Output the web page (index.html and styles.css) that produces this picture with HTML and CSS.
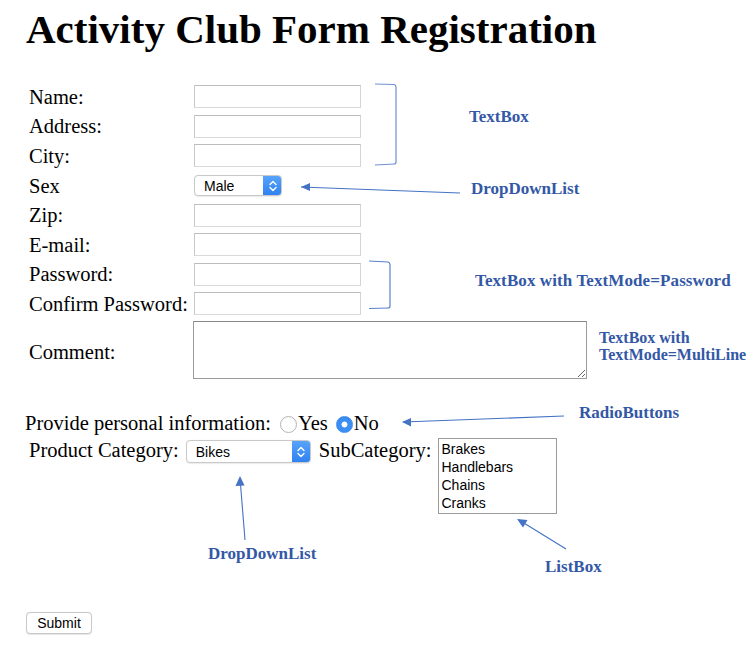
FILE: index.html
```html
<!DOCTYPE html>
<html>
<head>
<meta charset="utf-8">
<title>Activity Club Form Registration</title>
<link rel="stylesheet" href="styles.css">
</head>
<body>
<div class="page">
  <h1 class="title">Activity Club Form Registration</h1>

  <div class="form-grid">
    <label class="lbl">Name:</label><input class="tb" type="text">
    <label class="lbl">Address:</label><input class="tb" type="text">
    <label class="lbl">City:</label><input class="tb" type="text">
    <label class="lbl">Sex</label>
    <span class="select sel-sex"><select><option>Male</option><option>Female</option></select><span class="cap"><svg width="10" height="14" viewBox="0 0 10 14"><path d="M2 5.5 L5 2.5 L8 5.5 M2 8.5 L5 11.5 L8 8.5" fill="none" stroke="#fff" stroke-width="1.4" stroke-linecap="round" stroke-linejoin="round"/></svg></span></span>
    <label class="lbl">Zip:</label><input class="tb" type="text">
    <label class="lbl">E-mail:</label><input class="tb" type="text">
    <label class="lbl">Password:</label><input class="tb" type="password">
    <label class="lbl">Confirm Password:</label><input class="tb" type="password">
    <label class="lbl lbl-comment">Comment:</label><textarea class="ta"></textarea>
  </div>

  <div class="radio-row">
    <span>Provide personal information:</span>
    <input class="rb" type="radio" name="pi" id="pi-yes"><label for="pi-yes">Yes</label>
    <input class="rb" type="radio" name="pi" id="pi-no" checked><label for="pi-no">No</label>
  </div>

  <div class="product-row">
    <span class="plbl">Product Category:</span>
    <span class="select sel-cat"><select><option>Bikes</option></select><span class="cap"><svg width="10" height="14" viewBox="0 0 10 14"><path d="M2 5.5 L5 2.5 L8 5.5 M2 8.5 L5 11.5 L8 8.5" fill="none" stroke="#fff" stroke-width="1.4" stroke-linecap="round" stroke-linejoin="round"/></svg></span></span>
    <span class="plbl sub">SubCategory:</span>
    <div class="listbox">
      <div class="opt">Brakes</div>
      <div class="opt">Handlebars</div>
      <div class="opt">Chains</div>
      <div class="opt">Cranks</div>
    </div>
  </div>

  <button class="submit" type="button">Submit</button>
</div>

<div class="notes">
  <svg class="notes-svg" width="753" height="653" viewBox="0 0 753 653">
    <path d="M375 84 L394 84.5 Q396 85 396 87 L396 162 Q396 164 394 164 L375 165" fill="none" stroke="#6f8fd0" stroke-width="1.2"/>
    <path d="M369 261 L388 262 Q390 262.5 390 264.5 L390 306 Q390 308 388 308 L369 308.5" fill="none" stroke="#5b80cc" stroke-width="1.2"/>
    <line x1="460" y1="193" x2="301" y2="187" stroke="#4472c4" stroke-width="1.1"/>
    <line x1="564" y1="416" x2="403" y2="422" stroke="#4472c4" stroke-width="1.1"/>
    <line x1="245" y1="540" x2="240" y2="478" stroke="#4472c4" stroke-width="1.1"/>
    <line x1="566" y1="549" x2="519" y2="520" stroke="#4472c4" stroke-width="1.1"/>
    <path d="M301 187 L310 183 L310 191 Z" fill="#4472c4"/>
    <path d="M402 422 L411 418 L411 426.5 Z" fill="#4472c4"/>
    <path d="M240 476 L235.5 486 L244.5 485.5 Z" fill="#4472c4"/>
    <path d="M517 519 L527.5 520 L523 527.5 Z" fill="#4472c4"/>
  </svg>
  <div class="note n-textbox">TextBox</div>
  <div class="note n-ddl1">DropDownList</div>
  <div class="note n-pass">TextBox with TextMode=Password</div>
  <div class="note n-multi">TextBox with<br>TextMode=MultiLine</div>
  <div class="note n-radio">RadioButtons</div>
  <div class="note n-ddl2">DropDownList</div>
  <div class="note n-list">ListBox</div>
</div>
</body>
</html>
```

FILE: styles.css
```css
html, body {
  margin: 0;
  padding: 0;
  background: #fff;
}

body {
  font-family: "Liberation Serif", "Times New Roman", serif;
  font-size: 20.5px;
  color: #000;
  position: relative;
  width: 753px;
  height: 653px;
  overflow: hidden;
}

.page {
  padding: 6px 0 0 25px;
}

.title {
  margin: 0 0 0 1px;
  font-size: 41px;
  line-height: 46px;
  font-weight: bold;
}

/* ---- main form grid ---- */
.form-grid {
  margin: 30px 0 0 4px;
  display: grid;
  grid-template-columns: 165px auto;
  grid-template-rows: repeat(8, 29.6px) auto;
  align-items: center;
  justify-items: start;
}

.lbl {
  line-height: 22px;
}

.lbl-comment {
  padding-top: 4px;
}

.tb {
  box-sizing: border-box;
  width: 167px;
  height: 23px;
  margin: 0;
  padding: 0 4px;
  border: 1px solid;
  border-color: #bdbdbd #d4d4d4 #dadada #c8c8c8;
  background: #fff;
  font: 14px "Liberation Sans", Arial, sans-serif;
  outline: none;
}

.ta {
  box-sizing: border-box;
  width: 394px;
  height: 58px;
  margin: 2.5px 0 2px -1px;
  border: 1px solid #9a9a9a;
  border-top-color: #8a8a8a;
  padding: 2px;
  font: 14px "Liberation Sans", Arial, sans-serif;
  resize: both;
}

/* ---- Mac-style select ---- */
.select {
  position: relative;
  display: inline-block;
  box-sizing: border-box;
  border: 1px solid #c9c9c9;
  border-radius: 4px;
  background: #fff;
  box-shadow: 0 0.5px 1px rgba(0, 0, 0, 0.08);
  overflow: hidden;
}

.select select {
  -webkit-appearance: none;
  appearance: none;
  display: block;
  box-sizing: border-box;
  border: 0;
  margin: 0;
  background: transparent;
  font: 14px "Liberation Sans", Arial, sans-serif;
  color: #000;
  padding: 0 0 0 9px;
  width: 100%;
  outline: none;
}

.sel-sex select {
  height: 19px;
}

.sel-cat select {
  height: 21px;
}

.select .cap {
  position: absolute;
  top: -1px;
  right: -1px;
  bottom: -1px;
  width: 19px;
  background: linear-gradient(#59a5fb, #2e80f0);
  border-radius: 0 4px 4px 0;
  display: flex;
  align-items: center;
  justify-content: center;
}

.sel-sex {
  width: 88px;
  height: 21px;
}

.sel-cat {
  width: 125px;
  height: 23px;
  margin: 2px 0 0 0;
}

/* ---- radio row ---- */
.radio-row {
  margin-top: 30px;
  display: flex;
  align-items: center;
  line-height: 24px;
  height: 24px;
}

.rb {
  -webkit-appearance: none;
  appearance: none;
  box-sizing: border-box;
  width: 17px;
  height: 17px;
  margin: 2px 1px 0 9px;
  border: 1px solid #b4b4b4;
  border-radius: 50%;
  background: #fff;
  box-shadow: inset 0 1px 1px rgba(0, 0, 0, 0.04);
}

.rb:checked {
  border-color: #3d8cf0;
  background: radial-gradient(circle, #fff 0 2.6px, #3d8ef2 3.3px);
}

#pi-no {
  margin-left: 8px;
}

/* ---- product row ---- */
.product-row {
  margin: 3px 0 0 4px;
  display: flex;
  align-items: flex-start;
  line-height: 24px;
}

.plbl {
  margin-right: 7px;
}

.sub {
  margin-left: 8px;
  margin-right: 6px;
}

.listbox {
  box-sizing: border-box;
  width: 119px;
  height: 76px;
  border: 1px solid #9b9b9b;
  padding: 1px 0 1px 3px;
  font: 14px "Liberation Sans", Arial, sans-serif;
  line-height: 18px;
  background: #fff;
}

/* ---- submit ---- */
.submit {
  display: block;
  margin: 98px 0 0 1px;
  box-sizing: border-box;
  width: 66px;
  height: 22px;
  padding: 0;
  border: 1px solid #c8c8c8;
  border-radius: 4px;
  background: #fff;
  font: 14px "Liberation Sans", Arial, sans-serif;
  color: #000;
  box-shadow: 0 0.5px 1px rgba(0, 0, 0, 0.1);
}

/* ---- annotations overlay ---- */
.notes {
  position: absolute;
  top: 0;
  left: 0;
  width: 753px;
  height: 653px;
  pointer-events: none;
}

.notes-svg {
  position: absolute;
  top: 0;
  left: 0;
}

.note {
  position: absolute;
  font-family: "Liberation Serif", "Times New Roman", serif;
  font-weight: bold;
  font-size: 17px;
  line-height: 17.4px;
  color: #3358a6;
  white-space: nowrap;
}

.n-textbox { left: 469px; top: 108px; }
.n-ddl1 { left: 471px; top: 180px; }
.n-pass { left: 475px; top: 272px; letter-spacing: 0.1px; }
.n-multi { left: 599px; top: 329px; font-size: 16px; }
.n-radio { left: 579px; top: 404px; }
.n-ddl2 { left: 208px; top: 545px; }
.n-list { left: 545px; top: 558px; }
```
